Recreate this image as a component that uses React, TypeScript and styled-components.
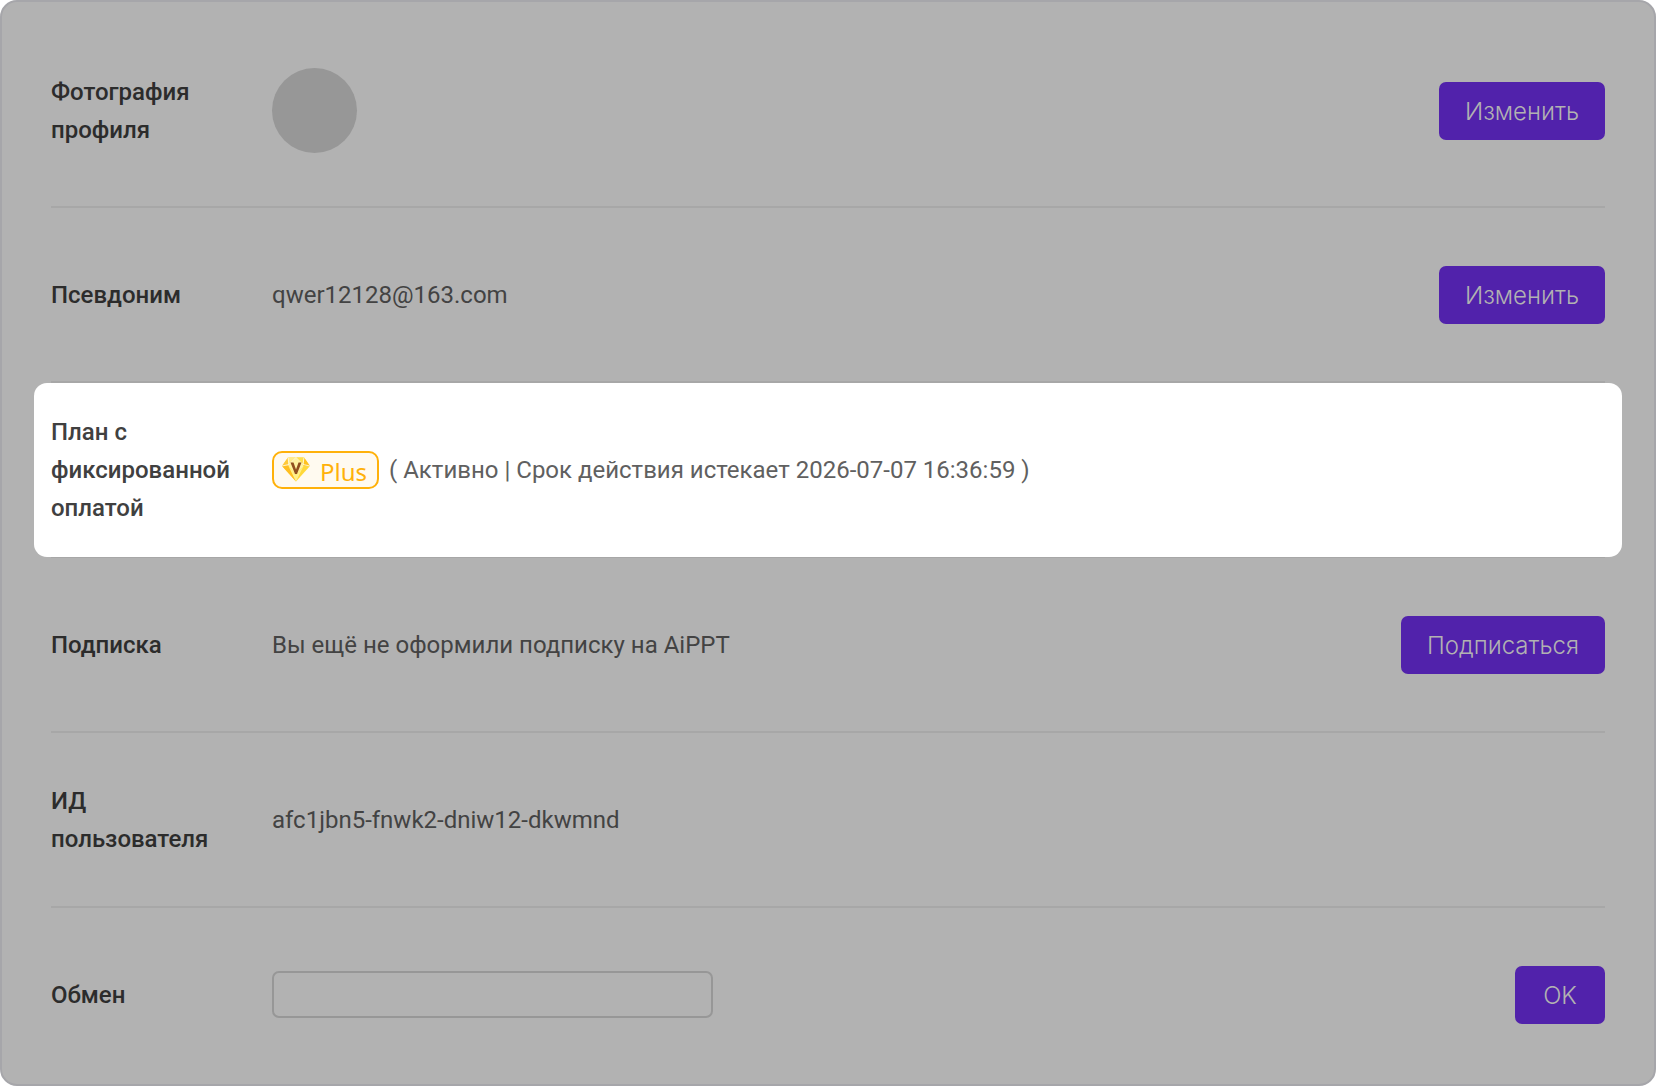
import React from "react";
import styled, { createGlobalStyle, css } from "styled-components";

const GlobalStyle = createGlobalStyle`
  *, *::before { box-sizing: border-box; }
  body {
    margin: 0;
    background: #ffffff;
    font-family: Roboto, "Noto Sans", sans-serif;
  }
`;

const Panel = styled.main`
  display: flex;
  flex-direction: column;
  min-height: 100vh;
  padding: 13px 49px 0;
  background: #b2b2b2;
  border: 2px solid #a6a6aa;
  border-radius: 17px;
`;

const Row = styled.section<{ $tall?: boolean; $last?: boolean; $active?: boolean }>`
  position: relative;
  display: grid;
  grid-template-columns: 181px minmax(0, 1fr) auto;
  column-gap: 40px;
  align-items: center;
  min-height: ${(p) => (p.$tall ? 193 : 175)}px;
  border-bottom: 2px solid ${(p) => (p.$last ? "transparent" : "#a7a7a7")};
  color: #434343;

  ${(p) =>
    p.$active &&
    css`
      z-index: 1;
      color: #606060;

      &::before {
        content: "";
        position: absolute;
        inset: 0 -17px -1px;
        z-index: -1;
        background: #ffffff;
        border-radius: 13px;
      }
    `}
`;

const Label = styled.label<{ $active?: boolean }>`
  color: ${(p) => (p.$active ? "#404040" : "#2c2c2c")};
  font-size: 24px;
  font-weight: 500;
  line-height: 38px;
`;

const Value = styled.div`
  display: flex;
  align-items: center;
  gap: 10px;
  font-size: 24px;
  line-height: 38px;
`;

const Avatar = styled.div`
  width: 85px;
  height: 85px;
  border-radius: 50%;
  background: #979797;
`;

const Button = styled.button`
  min-width: 90px;
  height: 58px;
  padding: 2px 26px 0;
  border: 0;
  border-radius: 7px;
  background: #5122ab;
  color: #b2b2b2;
  font-family: Inter, "Liberation Sans", sans-serif;
  font-size: 24px;
  font-weight: 300;
  cursor: pointer;
`;

const Badge = styled.span`
  display: inline-flex;
  align-items: center;
  gap: 10px;
  height: 38px;
  padding: 0 10px 0 8px;
  border: 2px solid #ffb10a;
  border-radius: 10px;
  background: #fffaf0;
  color: #ffb10a;
`;

const BadgeText = styled.span`
  padding-top: 4px;
  font-family: "Noto Sans", "Open Sans", sans-serif;
  font-size: 24px;
  line-height: 30px;
`;

const CodeInput = styled.input`
  width: 100%;
  max-width: 441px;
  height: 47px;
  padding: 0 12px;
  border: 2px solid #979797;
  border-radius: 7px;
  background: transparent;
  color: #434343;
  font: inherit;
  outline: none;
`;

const Diamond = () => (
  <svg width="28" height="25" viewBox="0 0 28 25" aria-hidden="true">
    <path d="M6 0.5h16l6 8.500L14 24.500 0 9z" fill="#ffd83a" />
    <path d="M6 0.500 0 9h6.500z" fill="#ffc93a" />
    <path d="M22 0.500 28 9h-6.500z" fill="#ffc21f" />
    <path d="M6 0.500h8L6.500 9z" fill="#ffeb8c" />
    <path d="M14 0.500h8L21.500 9z" fill="#ffe04d" />
    <path d="M14 0.500 21.500 9 14 18 6.500 9z" fill="#fff3a0" />
    <path d="M0 9h6.500L14 24.500z" fill="#ffbe22" />
    <path d="M6.500 9 14 18l7.500-9L14 24.500z" fill="#fff08a" />
    <path d="M0 9 7 7.500 6 0.500M28 9 21 7.500 22 0.500M7 7.500 14 0.500l7 7" fill="none" stroke="#fffaf0" strokeWidth="0.800" />
    <path d="M8.500 5.500h3L14 12.500l2.500-7h3L15 17h-2z" fill="#91501f" />
  </svg>
);

export default function App() {
  return (
    <>
      <GlobalStyle />
      <Panel>
        <Row $tall>
          <Label as="span">Фотография профиля</Label>
          <Avatar />
          <Button type="button">Изменить</Button>
        </Row>
        <Row>
          <Label as="span">Псевдоним</Label>
          <Value>qwer12128@163.com</Value>
          <Button type="button">Изменить</Button>
        </Row>
        <Row $active>
          <Label as="span" $active>План с фиксированной оплатой</Label>
          <Value>
            <Badge>
              <Diamond />
              <BadgeText>Plus</BadgeText>
            </Badge>
            <span>( Активно | Срок действия истекает 2026-07-07 16:36:59 )</span>
          </Value>
        </Row>
        <Row>
          <Label as="span">Подписка</Label>
          <Value>Вы ещё не оформили подписку на AiPPT</Value>
          <Button type="button">Подписаться</Button>
        </Row>
        <Row>
          <Label as="span">ИД пользователя</Label>
          <Value>afc1jbn5-fnwk2-dniw12-dkwmnd</Value>
        </Row>
        <Row $last>
          <Label htmlFor="exchange-code">Обмен</Label>
          <Value>
            <CodeInput id="exchange-code" type="text" />
          </Value>
          <Button type="button">OK</Button>
        </Row>
      </Panel>
    </>
  );
}
